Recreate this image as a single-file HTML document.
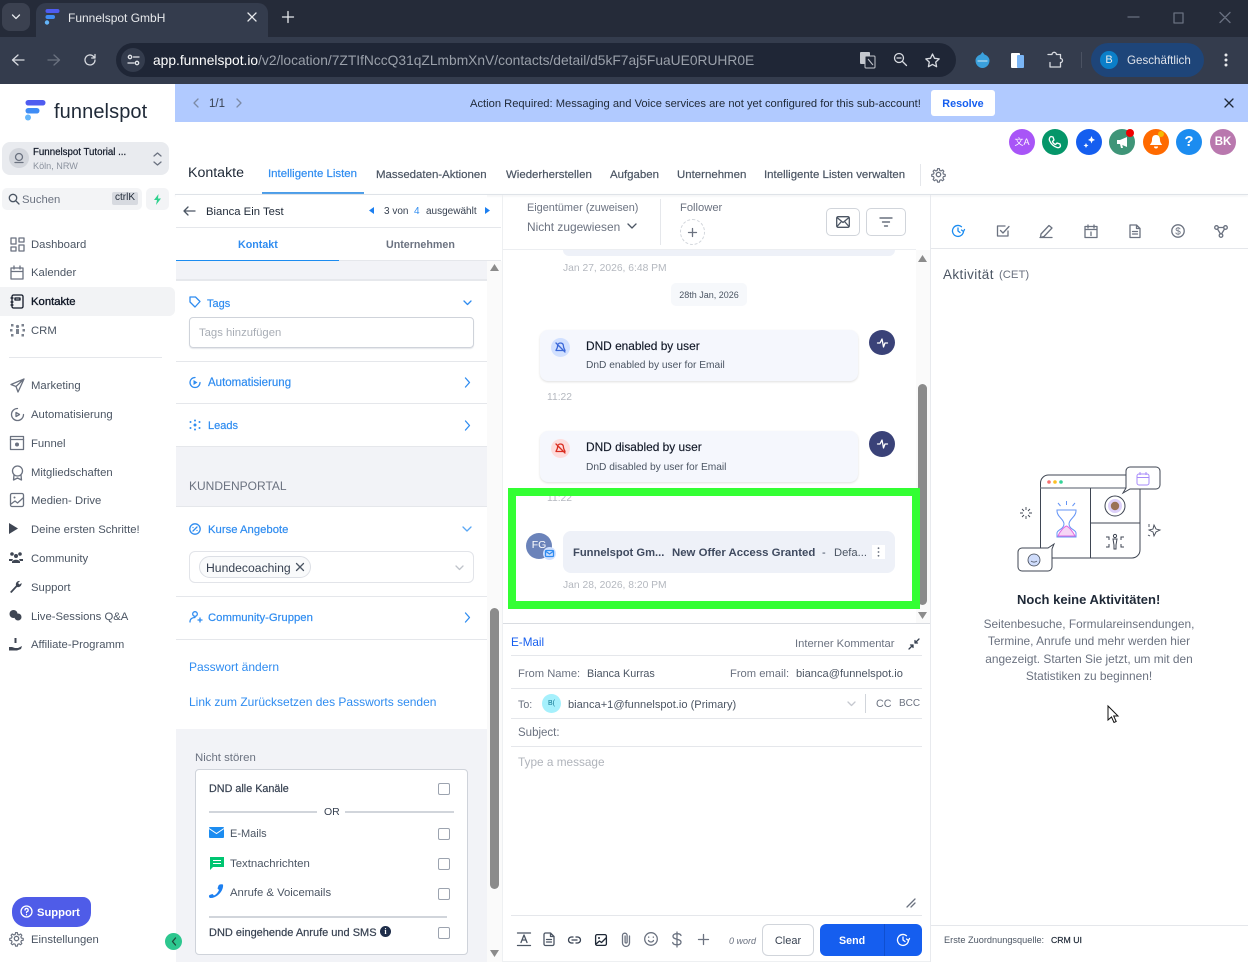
<!DOCTYPE html>
<html lang="de"><head><meta charset="utf-8"><title>Funnelspot GmbH</title>
<style>
*{box-sizing:border-box}
html,body{margin:0;padding:0;width:1248px;height:962px;overflow:hidden;background:#fff;font-family:"Liberation Sans",sans-serif}
.a{position:absolute}
.t{position:absolute;white-space:nowrap;line-height:16px;font-size:12px;color:#4b5563}
.n{font-size:11.3px}
.k{font-size:11.45px;top:168px;-webkit-text-stroke:.2px #4b5563}
.l{font-size:11.3px;color:#2f8cf0;-webkit-text-stroke:.2px #2f8cf0}
svg{position:absolute;overflow:visible}
.s{fill:none;stroke:currentColor;stroke-width:1.3;stroke-linecap:round;stroke-linejoin:round}
.hl{position:absolute;height:1px;background:#e5e7eb}
.cb{position:absolute;width:12px;height:12px;border:1px solid #9ca3af;border-radius:2px;background:#fff;left:438px}
.c{position:absolute;width:26px;height:26px;border-radius:50%;top:129px}
</style></head><body>

<!-- Browser chrome -->
<div class="a" style="left:0;top:0;width:1248px;height:84px;background:#252b39"></div>
<div class="a" style="left:0;top:37px;width:1248px;height:47px;background:#343c4d"></div>
<div class="a" style="left:2px;top:3px;width:28px;height:28px;background:#3b4150;border-radius:8px"></div>
<svg style="left:0;top:0" width="30" height="34" color="#e5e7eb"><path class="s" stroke-width="1.8" d="M12.500 15l3.500 3.500 3.500-3.500"/></svg>
<div class="a" style="left:36px;top:3px;width:232px;height:34px;background:#343c4d;border-radius:10px 10px 0 0"></div>
<svg style="left:44px;top:9px" width="16" height="16"><rect x="1.500" y="0" width="14" height="4" rx="2" fill="#4f5cf0"/><rect x="1.500" y="6" width="9.500" height="4" rx="2" fill="#3f8cf5"/><circle cx="3" cy="13.500" r="2.200" fill="#64b5fa"/></svg>
<div class="t" style="left:68px;top:10px;font-size:12px;color:#e8eaed">Funnelspot GmbH</div>
<svg style="left:247px;top:12px" width="10" height="10" color="#e8eaed"><path class="s" stroke-width="1.5" d="M1 1l8 8M9 1l-8 8"/></svg>
<svg style="left:282px;top:11px" width="12" height="12" color="#e8eaed"><path class="s" stroke-width="1.5" d="M6 0.5v11M0.5 6h11"/></svg>
<svg style="left:1127px;top:12px" width="110" height="12" color="#697080"><path class="s" d="M1 5h11M47 1h9v10h-9zM93 0.5l10 10M103 0.5l-10 10"/></svg>

<svg style="left:11px;top:53px" width="14" height="14" color="#d7dae0"><path class="s" stroke-width="1.5" d="M13 7H2M7 2L1.500 7 7 12"/></svg>
<svg style="left:47px;top:53px" width="14" height="14" color="#6b7280"><path class="s" stroke-width="1.5" d="M1 7h11M7 2l5.500 5L7 12"/></svg>
<svg style="left:83px;top:53px" width="14" height="14" color="#d7dae0"><path class="s" stroke-width="1.5" d="M12 7a5 5 0 1 1-1.600-3.700L12 5V1.500M12 5H8.700"/></svg>
<div class="a" style="left:116px;top:43px;width:840px;height:34px;background:#1f2636;border-radius:17px"></div>
<div class="a" style="left:121px;top:48px;width:24px;height:24px;background:#343c4d;border-radius:50%"></div>
<svg style="left:127px;top:54px" width="13" height="12" color="#e5e7eb"><circle class="s" cx="3" cy="3" r="1.700"/><path class="s" d="M6.500 3H12M1 9h6"/><circle class="s" cx="10" cy="9" r="1.700"/></svg>
<div class="t" style="left:153px;top:53px;font-size:13.8px;color:#9aa0aa"><span style="color:#fff">app.funnelspot.io</span>/v2/location/7ZTIfNccQ31qZLmbmXnV/contacts/detail/d5kF7aj5FuaUE0RUHR0E</div>
<svg style="left:859px;top:51px" width="18" height="18"><rect x="1" y="1" width="10" height="12" rx="1" fill="#c5c8cf"/><rect x="6" y="5" width="10" height="12" rx="1" fill="#1f2636" stroke="#c5c8cf"/><path d="M9 8l5 6" stroke="#c5c8cf"/></svg>
<svg style="left:893px;top:52px" width="15" height="15" color="#d7dae0"><circle class="s" cx="6" cy="6" r="4.500"/><path class="s" d="M4 6h4M9.500 9.500l4 4"/></svg>
<svg style="left:925px;top:53px" width="15" height="14" color="#d7dae0"><path class="s" d="M7.500 1l2 4.300 4.700.6-3.500 3.200.9 4.600-4.100-2.300-4.100 2.300.9-4.600L.8 5.900l4.700-.6z"/></svg>
<svg style="left:975px;top:52px" width="15" height="16"><path d="M7.500 0l2 2.500c3 1 5 3.500 5 6 0 4-3 7.500-7 7.500s-7-3.500-7-7.500c0-2.500 2-5 5-6z" fill="#3aa0dc"/><path d="M2.500 9h10" stroke="#cfe8f5"/></svg>
<svg style="left:1011px;top:52px" width="14" height="16"><rect x="0" y="1" width="9" height="15" rx="1" fill="#fff"/><rect x="6" y="3" width="7" height="13" rx="1" fill="#7ab5f5"/></svg>
<svg style="left:1047px;top:51px" width="16" height="17" color="#d7dae0"><path class="s" stroke-width="1.500" d="M1 3.500h4a2.200 2.200 0 0 1 4.400 0h4.100v4a2 2 0 0 1 0 4v4.500h-10.500v-4.500"/></svg>
<div class="a" style="left:1081px;top:52px;width:1px;height:16px;background:#4b5262"></div>
<div class="a" style="left:1091px;top:43px;width:113px;height:34px;background:#1e4579;border-radius:17px"></div>
<div class="a" style="left:1100px;top:51px;width:18px;height:18px;background:#0b7fc9;border-radius:50%;color:#e8eaed;font-size:11px;line-height:18px;text-align:center">B</div>
<div class="t" style="left:1127px;top:53px;font-size:11.6px;color:#dfe3ea">Geschäftlich</div>
<svg style="left:1224px;top:53px" width="4" height="14"><circle cx="2" cy="2" r="1.500" fill="#e8eaed"/><circle cx="2" cy="7" r="1.500" fill="#e8eaed"/><circle cx="2" cy="12" r="1.500" fill="#e8eaed"/></svg>

<!-- Sidebar -->
<div class="a" style="left:0;top:84px;width:175px;height:878px;background:#fff"></div>
<svg style="left:24px;top:99px" width="22" height="24"><rect x="1.500" y="1" width="20" height="5.500" rx="2.700" fill="#4f5cf0"/><rect x="1.500" y="9" width="14" height="5.500" rx="2.700" fill="#3f8cf5"/><circle cx="4" cy="18.500" r="3" fill="#64b5fa"/></svg>
<div class="t" style="left:54px;top:101px;font-size:20px;line-height:22px;color:#1f2937;letter-spacing:.1px">funnelspot</div>
<div class="a" style="left:2px;top:142px;width:167px;height:33px;background:#e9ebef;border-radius:8px"></div>
<div class="a" style="left:9px;top:148px;width:20px;height:20px;background:#d3d6dc;border-radius:50%"></div>
<svg style="left:13px;top:152px" width="12" height="12" color="#6b7280"><circle class="s" cx="6" cy="5" r="3.500" stroke-width="1"/><path class="s" stroke-width="1" d="M2 10.500h8"/></svg>
<div class="t" style="left:33px;top:145px;font-size:9.7px;color:#111827;-webkit-text-stroke:.2px #111827">Funnelspot Tutorial ...</div>
<div class="t" style="left:33px;top:158px;font-size:9.1px;color:#8b929e">Köln, NRW</div>
<svg style="left:153px;top:152px" width="9" height="14" color="#6b7280"><path class="s" stroke-width="1" d="M1 4l3.500-3L8 4M1 10l3.500 3L8 10"/></svg>
<div class="a" style="left:2px;top:188px;width:140px;height:22px;background:#f3f4f6;border-radius:5px"></div>
<svg style="left:8px;top:193px" width="12" height="12" color="#4b5563"><circle class="s" cx="5" cy="5" r="3.700"/><path class="s" d="M8 8l3 3"/></svg>
<div class="t n" style="left:22px;top:192px;color:#6b7280">Suchen</div>
<div class="a" style="left:112px;top:192px;width:26px;height:13px;background:#d7dae0;border-radius:2px;font-size:10px;line-height:12px;text-align:center;color:#1f2937">ctrlK</div>
<div class="a" style="left:146px;top:188px;width:23px;height:22px;background:#f3f4f6;border-radius:5px"></div>
<svg style="left:153px;top:194px" width="9" height="11"><path d="M5.500 0L1 6h3l-1 5 5-6.500H5z" fill="#2fd18e"/></svg>

<div class="a" style="left:0;top:287px;width:175px;height:29px;background:#f2f3f5;border-radius:0 6px 6px 0"></div>
<div class="t n" style="left:31px;top:237px">Dashboard</div>
<div class="t n" style="left:31px;top:265px">Kalender</div>
<div class="t n" style="left:31px;top:294px;color:#111827;-webkit-text-stroke:.35px #111827">Kontakte</div>
<div class="t n" style="left:31px;top:323px">CRM</div>
<div class="hl" style="left:9px;top:357px;width:153px"></div>
<div class="t n" style="left:31px;top:378px">Marketing</div>
<div class="t n" style="left:31px;top:407px">Automatisierung</div>
<div class="t n" style="left:31px;top:436px">Funnel</div>
<div class="t n" style="left:31px;top:465px">Mitgliedschaften</div>
<div class="t n" style="left:31px;top:493px">Medien- Drive</div>
<div class="t n" style="left:31px;top:522px">Deine ersten Schritte!</div>
<div class="t n" style="left:31px;top:551px">Community</div>
<div class="t n" style="left:31px;top:580px">Support</div>
<div class="t n" style="left:31px;top:609px">Live-Sessions Q&amp;A</div>
<div class="t n" style="left:31px;top:637px">Affiliate-Programm</div>
<svg style="left:10px;top:237px" width="15" height="15" color="#6b7280"><path class="s" stroke-width="1" d="M1 1h5v6H1zM9 1h5v4H9zM1 10h5v4H1zM9 8h5v6H9z"/></svg>
<svg style="left:10px;top:265px" width="14" height="15" color="#6b7280"><path class="s" stroke-width="1" d="M1 3h12v11H1zM1 6.500h12M4 1v3M10 1v3"/></svg>
<svg style="left:10px;top:294px" width="14" height="15" color="#111827"><rect class="s" x="2" y="1" width="11" height="13" rx="1.500"/><path class="s" d="M5 4h5v2H5zM1 4h2M1 8h2M1 11h2"/></svg>
<svg style="left:10px;top:323px" width="15" height="14"><g fill="#7b828e"><circle cx="7.500" cy="3.500" r="1.600"/><rect x="6" y="6" width="3" height="5"/><rect x="1" y="1" width="2.500" height="2.500"/><rect x="11.500" y="1" width="2.500" height="2.500"/><rect x="0" y="6" width="2.500" height="2.500"/><rect x="12.500" y="6" width="2.500" height="2.500"/><rect x="1" y="11" width="2.500" height="2.500"/><rect x="11.500" y="11" width="2.500" height="2.500"/></g></svg>
<svg style="left:10px;top:378px" width="15" height="15" color="#6b7280"><path class="s" stroke-width="1" d="M14 1L1 6.500 6 8.500 8 14zM6 8.500L14 1"/></svg>
<svg style="left:10px;top:407px" width="15" height="15" color="#6b7280"><path class="s" stroke-width="1" d="M13.500 7.500a6 6 0 1 1-6-6M6 5.500l3.500 2L6 9.500z"/></svg>
<svg style="left:10px;top:436px" width="14" height="14" color="#6b7280"><rect class="s" stroke-width="1" x=".5" y=".5" width="13" height="13"/><path class="s" stroke-width="1" d="M.5 3.500h13"/><circle cx="7" cy="8.500" r="2" fill="#6b7280"/></svg>
<svg style="left:11px;top:465px" width="13" height="16" color="#6b7280"><circle class="s" stroke-width="1" cx="6.500" cy="6" r="5"/><path class="s" stroke-width="1" d="M3 10l-.5 5L6.500 13l4 2-.5-5"/></svg>
<svg style="left:10px;top:493px" width="14" height="14" color="#6b7280"><rect class="s" stroke-width="1" x=".5" y=".5" width="13" height="13" rx="1.500"/><circle cx="4.500" cy="4.500" r="1" fill="#6b7280"/><path class="s" stroke-width="1" d="M1 11l4-3 2.500 2L13 5"/></svg>
<svg style="left:9px;top:523px" width="9" height="11"><path d="M0 0l9 5.500L0 11z" fill="#3f4653"/></svg>
<svg style="left:9px;top:552px" width="14" height="11"><g fill="#3f4653"><circle cx="3" cy="2" r="1.800"/><circle cx="11" cy="2" r="1.800"/><circle cx="7" cy="4" r="2"/><path d="M0 7h4l-1 2H0zM14 7h-4l1 2h3zM3 10c0-3 8-3 8 0v1H3z"/></g></svg>
<svg style="left:9px;top:580px" width="13" height="13"><path d="M1 12l6-6.500A3.500 3.500 0 0 1 11 1L9 3l1.500 1.500L12.500 3A3.500 3.500 0 0 1 8 7l-5.500 6z" fill="#3f4653"/></svg>
<svg style="left:9px;top:610px" width="13" height="11"><circle cx="4.500" cy="4" r="4" fill="#3f4653"/><circle cx="9" cy="7" r="3.500" fill="#3f4653"/></svg>
<svg style="left:9px;top:637px" width="13" height="14"><path d="M5.500 1h2v5h-2zM0 10h3l3 1h3l4-2-1 3-4 1.500H0z" fill="#3f4653"/></svg>

<div class="a" style="left:12px;top:897px;width:79px;height:30px;background:#4f5ce8;border-radius:14px 8px 14px 14px"></div>
<svg style="left:20px;top:905px" width="13" height="13" color="#fff"><circle class="s" stroke-width="1" cx="6.500" cy="6.500" r="5.500"/><path class="s" stroke-width="1" d="M5 5a1.600 1.600 0 1 1 2 1.600c-.5.2-.5.6-.5 1M6.500 9.500v.2"/></svg>
<div class="t" style="left:37px;top:905px;color:#fff;font-weight:bold;font-size:11.2px">Support</div>
<svg style="left:9px;top:931px" width="15" height="15" color="#6b7280"><circle class="s" stroke-width="1" cx="7.500" cy="7.500" r="2.200"/><path class="s" stroke-width="1" d="M6.500 1h2l.4 2 1.500.6 1.700-1.100 1.400 1.400-1.100 1.700.6 1.500 2 .4v2l-2 .4-.6 1.500 1.100 1.700-1.400 1.400-1.700-1.100-1.500.6-.4 2h-2l-.4-2-1.500-.6-1.700 1.100-1.400-1.400 1.100-1.700-.6-1.500-2-.4v-2l2-.4.6-1.500-1.100-1.700 1.400-1.400 1.700 1.100 1.500-.6z" transform="scale(.9) translate(.8 .8)"/></svg>
<div class="t n" style="left:31px;top:932px">Einstellungen</div>

<!-- Top banner -->
<div class="a" style="left:175px;top:84px;width:1073px;height:38px;background:#b1caff"></div>
<svg style="left:192px;top:98px" width="8" height="10" color="#7c8aa5"><path class="s" d="M6 1L2 5l4 4"/></svg>
<div class="t" style="left:209px;top:96px;font-size:11.5px;color:#374151">1/1</div>
<svg style="left:235px;top:98px" width="8" height="10" color="#7c8aa5"><path class="s" d="M2 1l4 4-4 4"/></svg>
<div class="t" style="left:470px;top:96px;font-size:11.18px;color:#1f2937">Action Required: Messaging and Voice services are not yet configured for this sub-account!</div>
<div class="a" style="left:931px;top:90px;width:64px;height:26px;background:#fff;border-radius:3px;text-align:center;font-size:10.8px;font-weight:bold;line-height:28px;color:#155eef">Resolve</div>
<svg style="left:1224px;top:98px" width="10" height="10" color="#1f2937"><path class="s" stroke-width="1.500" d="M1 1l8 8M9 1l-8 8"/></svg>

<!-- Header icons -->
<div class="c" style="left:1009px;background:#a855f7;color:#fff;font-size:9px;line-height:27px;text-align:center;font-family:'Liberation Sans','Noto Sans CJK SC',sans-serif">文A</div>
<div class="c" style="left:1042px;background:#059669"></div>
<svg style="left:1048px;top:135px" width="14" height="14" color="#fff"><path class="s" d="M3 1.500l2 .5 1 3-1.500 1.500c.5 1.500 1.500 2.500 3 3L9 8l3 1 .5 2c-.5 1.500-2 2-3.500 1.500C6 11.500 3 9 1.500 5.500 1 4 1.500 2 3 1.500z"/></svg>
<div class="c" style="left:1076px;background:#155eef"></div>
<svg style="left:1082px;top:135px" width="14" height="14"><path d="M9.500 1l1 2.500L13 5l-2.500 1-1 2.500-1-2.500L6 5l2.500-1.500zM4 8l.8 1.700L6.500 10.500l-1.700.8L4 13l-.8-1.700-1.700-.8 1.700-.8z" fill="#fff"/></svg>
<div class="c" style="left:1109px;background:#3f9578"></div>
<svg style="left:1116px;top:135px" width="14" height="14"><path d="M1 5h3l7-3v10L4 9H1z" fill="#fff"/><path d="M4 9l1 4h2L6 9" fill="#fff"/></svg>
<div class="a" style="left:1126px;top:129px;width:8px;height:8px;border-radius:50%;background:#ef0000"></div>
<div class="c" style="left:1143px;background:#ff6a00"></div>
<svg style="left:1149px;top:134px" width="14" height="16"><path d="M7 1c3 0 4 2 4 5 0 3 2 4 2 5H1c0-1 2-2 2-5 0-3 1-5 4-5zM5 12.500h4a2 2 0 0 1-4 0z" fill="#fff"/></svg>
<div class="a" style="left:1158px;top:131px;width:6px;height:6px;border-radius:50%;background:#f5b800"></div>
<div class="c" style="left:1176px;background:#1c8cf0;color:#fff;font-size:15px;font-weight:bold;line-height:26px;text-align:center">?</div>
<div class="c" style="left:1210px;background:#b978ae;color:#fff;font-size:11.5px;font-weight:bold;line-height:26px;text-align:center">BK</div>

<!-- Nav row -->
<div class="t" style="left:188px;top:165px;font-size:14.2px;color:#1f2937">Kontakte</div>
<div class="t k" style="left:268px;top:166px;color:#2f8cf0;-webkit-text-stroke:.2px #2f8cf0">Intelligente Listen</div>
<div class="a" style="left:262px;top:192px;width:102px;height:2px;background:#4a9be8"></div>
<div class="t k" style="left:376px;top:167px">Massedaten-Aktionen</div>
<div class="t k" style="left:506px;top:167px">Wiederherstellen</div>
<div class="t k" style="left:610px;top:167px">Aufgaben</div>
<div class="t k" style="left:677px;top:167px">Unternehmen</div>
<div class="t k" style="left:764px;top:167px">Intelligente Listen verwalten</div>
<div class="a" style="left:920px;top:164px;width:1px;height:22px;background:#e5e7eb"></div>
<svg style="left:931px;top:167px" width="15" height="15" color="#6b7280"><circle class="s" stroke-width="1" cx="7.500" cy="7.500" r="2.200"/><path class="s" stroke-width="1" d="M6.500 1h2l.4 2 1.500.6 1.700-1.100 1.400 1.400-1.100 1.700.6 1.500 2 .4v2l-2 .4-.6 1.500 1.100 1.700-1.400 1.400-1.700-1.100-1.500.6-.4 2h-2l-.4-2-1.500-.6-1.700 1.100-1.400-1.400 1.100-1.700-.6-1.500-2-.4v-2l2-.4.6-1.500-1.100-1.700 1.400-1.400 1.700 1.100 1.500-.6z" transform="scale(.9) translate(.8 .8)"/></svg>
<div class="a" style="left:175px;top:194px;width:1073px;height:1px;background:#dfe3e8;box-shadow:0 1px 2px #e5e7eb"></div>

<!-- Left contact panel -->
<div class="a" style="left:176px;top:195px;width:311px;height:767px;background:#fff"></div>
<svg style="left:183px;top:206px" width="13" height="10" color="#4b5563"><path class="s" d="M12 5H1M5 1L1 5l4 4"/></svg>
<div class="t" style="left:206px;top:204px;font-size:11.3px;color:#1f2937">Bianca Ein Test</div>
<svg style="left:369px;top:207px" width="5" height="7"><path d="M5 0v7L0 3.500z" fill="#1c7ff0"/></svg>
<div class="t" style="left:384px;top:204px;font-size:10px;color:#374151">3 von</div>
<div class="t" style="left:414px;top:204px;font-size:10px;color:#2f8cf0">4</div>
<div class="t" style="left:426px;top:204px;font-size:10px;color:#374151">ausgewählt</div>
<svg style="left:485px;top:207px" width="5" height="7"><path d="M0 0v7l5-3.500z" fill="#1c7ff0"/></svg>
<div class="hl" style="left:176px;top:227px;width:325px"></div>
<div class="t" style="left:238px;top:237px;font-size:10.7px;font-weight:bold;color:#2f8cf0">Kontakt</div>
<div class="t" style="left:386px;top:237px;font-size:10.7px;font-weight:bold;color:#6b7280">Unternehmen</div>
<div class="a" style="left:176px;top:260px;width:163px;height:1px;background:#1c8cf0"></div>
<div class="hl" style="left:339px;top:260px;width:162px"></div>

<div class="a" style="left:176px;top:261px;width:311px;height:20px;background:#f2f3f7;border-bottom:2px solid #e6e8ec"></div>
<div class="a" style="left:189px;top:261px;width:70px;height:3px;overflow:hidden"><div class="t" style="left:0;top:-12px;font-size:11px;color:#6b7280">AKTIVITÄTEN</div></div>
<div class="a" style="left:176px;top:361px;width:311px;height:1px;background:#e5e7eb"></div>
<div class="a" style="left:176px;top:403px;width:311px;height:1px;background:#e5e7eb"></div>
<div class="a" style="left:176px;top:446px;width:311px;height:61px;background:#f2f3f7;border-top:1px solid #e5e7eb;border-bottom:1px solid #e5e7eb"></div>

<svg style="left:189px;top:296px" width="12" height="12" color="#2f8cf0"><path class="s" d="M1 1h5.500L11 5.500 6 11 1 6z"/></svg>
<div class="t l" style="left:207px;top:296px;font-size:11px">Tags</div>
<svg style="left:463px;top:300px" width="9" height="6" color="#2f8cf0"><path class="s" d="M1 1l3.500 3.500L8 1"/></svg>
<div class="a" style="left:189px;top:317px;width:285px;height:31px;border:1px solid #cfd3da;border-radius:4px;box-shadow:0 1px 1px #e5e7eb"></div>
<div class="t" style="left:199px;top:325px;font-size:11.3px;color:#a8adb5">Tags hinzufügen</div>

<svg style="left:189px;top:376px" width="12" height="13" color="#2f8cf0"><path class="s" d="M11 6.500a5 5 0 1 1-5-5"/><path d="M4.500 4l4 2.500-4 2.500z" fill="#2f8cf0"/></svg>
<div class="t l" style="left:208px;top:375px;font-size:11.5px">Automatisierung</div>
<svg style="left:464px;top:377px" width="7" height="11" color="#2f8cf0"><path class="s" d="M1.500 1l4 4.500-4 4.500"/></svg>
<svg style="left:189px;top:419px" width="12" height="12"><g fill="#2f8cf0"><circle cx="6" cy="6" r="1.500"/><circle cx="1.500" cy="3" r="1"/><circle cx="1.500" cy="9" r="1"/><circle cx="10.500" cy="3" r="1"/><circle cx="10.500" cy="9" r="1"/><circle cx="6" cy="1.500" r="1"/><circle cx="6" cy="10.500" r="1"/></g></svg>
<div class="t l" style="left:208px;top:418px;font-size:11px">Leads</div>
<svg style="left:464px;top:420px" width="7" height="11" color="#2f8cf0"><path class="s" d="M1.500 1l4 4.500-4 4.500"/></svg>

<div class="t" style="left:189px;top:478px;color:#6b7280">KUNDENPORTAL</div>

<svg style="left:189px;top:523px" width="12" height="12" color="#2f8cf0"><circle class="s" cx="6" cy="6" r="5.200"/><path class="s" d="M4 8l4-4M4 4.500v0M8 7.500v0"/></svg>
<div class="t l" style="left:208px;top:522px">Kurse Angebote</div>
<svg style="left:462px;top:526px" width="10" height="6" color="#5aa7f5"><path class="s" d="M1 1l4 4 4-4"/></svg>
<div class="a" style="left:189px;top:551px;width:285px;height:32px;border:1px solid #e2e4e9;border-radius:6px"></div>
<div class="a" style="left:199px;top:556px;width:112px;height:22px;border:1px solid #dcdfe5;border-radius:11px;background:#f9fafb"></div>
<div class="t" style="left:206px;top:560px;font-size:12.2px;color:#374151">Hundecoaching</div>
<svg style="left:296px;top:563px" width="8" height="8" color="#4b5563"><path class="s" stroke-width="1" d="M.5.500l7 7M7.500.500l-7 7"/></svg>
<svg style="left:455px;top:565px" width="9" height="6" color="#bfc3ca"><path class="s" stroke-width="1" d="M1 1l3.500 3.500L8 1"/></svg>
<div class="a" style="left:176px;top:596px;width:311px;height:1px;background:#e5e7eb"></div>
<svg style="left:189px;top:611px" width="13" height="12" color="#2f8cf0"><circle class="s" stroke-width="1" cx="6" cy="3" r="2.300"/><path class="s" stroke-width="1" d="M1 11c0-3 2-4.500 5-4.500M9 9h4M11 7v4"/></svg>
<div class="t l" style="left:208px;top:610px">Community-Gruppen</div>
<svg style="left:464px;top:612px" width="7" height="11" color="#2f8cf0"><path class="s" d="M1.500 1l4 4.500-4 4.500"/></svg>
<div class="a" style="left:176px;top:639px;width:311px;height:1px;background:#e5e7eb"></div>
<div class="t" style="left:189px;top:659px;font-size:12px;color:#2f8cf0">Passwort ändern</div>
<div class="t" style="left:189px;top:694px;font-size:12px;color:#2f8cf0">Link zum Zurücksetzen des Passworts senden</div>

<div class="a" style="left:176px;top:729px;width:311px;height:233px;background:#f2f3f7"></div>
<div class="t" style="left:195px;top:750px;font-size:11.4px;color:#6b7280">Nicht stören</div>
<div class="a" style="left:195px;top:769px;width:273px;height:186px;background:#fff;border:1px solid #cfd3da;border-radius:4px"></div>
<div class="t" style="left:209px;top:781px;font-size:10.8px;-webkit-text-stroke:.2px #374151;color:#374151">DND alle Kanäle</div>
<div class="cb" style="top:783px"></div>
<div class="a" style="left:209px;top:811px;width:108px;height:2px;background:#d1d5db"></div>
<div class="t" style="left:324px;top:804px;font-size:10.5px;color:#374151">OR</div>
<div class="a" style="left:345px;top:811px;width:109px;height:2px;background:#d1d5db"></div>
<svg style="left:209px;top:827px" width="15" height="11"><rect width="15" height="11" rx="1" fill="#1c8cf0"/><path d="M0 1.500l7.500 5 7.500-5" fill="none" stroke="#fff"/></svg>
<div class="t" style="left:230px;top:826px;font-size:11px;color:#4b5563">E-Mails</div>
<div class="cb" style="top:828px"></div>
<svg style="left:210px;top:857px" width="14" height="13"><path d="M0 0h14v10H3l-3 3z" fill="#00c571"/><path d="M3 3.500h8M3 6.500h8" stroke="#fff"/></svg>
<div class="t" style="left:230px;top:856px;font-size:11.4px;color:#4b5563">Textnachrichten</div>
<div class="cb" style="top:858px"></div>
<svg style="left:209px;top:884px" width="15" height="15"><path d="M14 0.500c1 6-6 14-13 13.500-1-.5-1.500-2-.5-3l3-1 1.500 1.500c2-1 4-3 5-5.500L8.500 4.500l1-3c1-1.500 3-1.500 4.500-1z" fill="#1c7ff0"/></svg>
<div class="t" style="left:230px;top:885px;font-size:11.3px;color:#4b5563">Anrufe &amp; Voicemails</div>
<div class="cb" style="top:888px"></div>
<div class="a" style="left:209px;top:916px;width:238px;height:2px;background:#d1d5db"></div>
<div class="t" style="left:209px;top:925px;font-size:11px;-webkit-text-stroke:.2px #374151;color:#374151">DND eingehende Anrufe und SMS</div>
<div class="a" style="left:380px;top:926px;width:11px;height:11px;border-radius:50%;background:#1f2e4a;color:#fff;font:bold 8px/11px 'Liberation Serif',serif;text-align:center">i</div>
<div class="cb" style="top:927px"></div>

<div class="a" style="left:165px;top:933px;width:17px;height:17px;border-radius:50%;background:#2dc78f"></div>
<svg style="left:171px;top:937px" width="6" height="9" color="#1f4a3a"><path class="s" d="M4.500 1L1.500 4.500 4.500 8"/></svg>

<!-- Left scrollbar -->
<div class="a" style="left:487px;top:261px;width:15px;height:701px;background:#fafafa"></div>
<svg style="left:490px;top:264px" width="9" height="7"><path d="M0 7l4.500-7L9 7z" fill="#8b8b8b"/></svg>
<div class="a" style="left:490px;top:608px;width:9px;height:281px;background:#8b8b8b;border-radius:5px"></div>
<svg style="left:490px;top:950px" width="9" height="7"><path d="M0 0l4.500 7L9 0z" fill="#8b8b8b"/></svg>

<!-- Center panel -->
<div class="a" style="left:502px;top:195px;width:1px;height:767px;background:#eef0f2"></div>
<div class="t" style="left:527px;top:200px;font-size:10.9px;color:#6b7280">Eigentümer (zuweisen)</div>
<div class="t" style="left:527px;top:219px;font-size:11.9px;color:#6b7280">Nicht zugewiesen</div>
<svg style="left:627px;top:223px" width="10" height="7" color="#4b5563"><path class="s" d="M1 1l4 4 4-4"/></svg>
<div class="a" style="left:660px;top:199px;width:1px;height:46px;background:#e5e7eb"></div>
<div class="t" style="left:680px;top:200px;font-size:11.2px;color:#6b7280">Follower</div>
<div class="a" style="left:680px;top:219px;width:25px;height:26px;border:1px dashed #d1d5db;border-radius:50%"></div>
<svg style="left:688px;top:228px" width="9" height="9" color="#6b7280"><path class="s" stroke-width="1" d="M4.500.5v8M.5 4.500h8"/></svg>
<div class="a" style="left:826px;top:208px;width:34px;height:28px;border:1px solid #d1d5db;border-radius:5px"></div>
<svg style="left:836px;top:216px" width="14" height="12" color="#4b5563"><rect class="s" x=".7" y=".7" width="12.600" height="10.600" rx="1.500"/><path class="s" stroke-width="1" d="M1 1.500l6 5 6-5M1 10.500l4.500-5M13 10.500l-4.500-5"/></svg>
<div class="a" style="left:866px;top:208px;width:40px;height:28px;border:1px solid #d1d5db;border-radius:5px"></div>
<svg style="left:879px;top:217px" width="14" height="10" color="#4b5563"><path class="s" stroke-width="1.300" d="M1 1h12M3.500 5h7M5.500 9h3"/></svg>
<div class="a" style="left:503px;top:249px;width:413px;height:1px;background:#eceef1"></div>

<div class="a" style="left:563px;top:250px;width:332px;height:6px;background:#eef1f8;border-radius:0 0 8px 8px"></div>
<div class="t" style="left:563px;top:261px;font-size:10.3px;color:#b4b8bf">Jan 27, 2026, 6:48 PM</div>
<div class="a" style="left:671px;top:283px;width:76px;height:23px;background:#f6f8fb;border-radius:5px;text-align:center;font-size:9px;line-height:25px;color:#4b5563">28th Jan, 2026</div>

<div class="a" style="left:540px;top:330px;width:318px;height:51px;background:#f5f7fd;border-radius:8px;box-shadow:0 1px 2px rgba(0,0,0,.13)"></div>
<div class="a" style="left:551px;top:338px;width:19px;height:19px;background:#d1e0ff;border-radius:50%"></div>
<svg style="left:555px;top:342px" width="11" height="11" color="#3b68d8"><path class="s" stroke-width="1" d="M5.500 1c2 0 3 1.500 3 3.500 0 2 1.500 3 1.500 4H1c0-1 1.500-2 1.500-4C2.500 2.500 3.500 1 5.500 1zM1 1l9 9"/></svg>
<div class="t" style="left:586px;top:338px;font-size:11.9px;color:#111827;-webkit-text-stroke:.15px #111827">DND enabled by user</div>
<div class="t" style="left:586px;top:358px;font-size:10.2px;color:#4b5563">DnD enabled by user for Email</div>
<div class="a" style="left:869px;top:330px;width:26px;height:25px;background:#3a4278;border-radius:50%"></div>
<svg style="left:877px;top:338px" width="11" height="10" color="#fff"><path class="s" d="M.5 5H3l2-4 1.500 8L8 5h2.500"/></svg>
<div class="t" style="left:547px;top:390px;font-size:10.3px;color:#b4b8bf">11:22</div>

<div class="a" style="left:540px;top:431px;width:318px;height:51px;background:#f5f7fd;border-radius:8px;box-shadow:0 1px 2px rgba(0,0,0,.13)"></div>
<div class="a" style="left:551px;top:439px;width:19px;height:19px;background:#fddcdc;border-radius:50%"></div>
<svg style="left:555px;top:443px" width="11" height="11" color="#d92d20"><path class="s" stroke-width="1" d="M5.500 1c2 0 3 1.500 3 3.500 0 2 1.500 3 1.500 4H1c0-1 1.500-2 1.500-4C2.500 2.500 3.500 1 5.500 1zM1 1l9 9"/></svg>
<div class="t" style="left:586px;top:439px;font-size:11.9px;color:#111827;-webkit-text-stroke:.15px #111827">DND disabled by user</div>
<div class="t" style="left:586px;top:460px;font-size:10.2px;color:#4b5563">DnD disabled by user for Email</div>
<div class="a" style="left:869px;top:431px;width:26px;height:26px;background:#3a4278;border-radius:50%"></div>
<svg style="left:877px;top:439px" width="11" height="10" color="#fff"><path class="s" d="M.5 5H3l2-4 1.500 8L8 5h2.500"/></svg>
<div class="t" style="left:547px;top:491px;font-size:10.3px;color:#b4b8bf">11:22</div>

<div class="a" style="left:526px;top:533px;width:26px;height:26px;background:#6b83ba;border-radius:50%;color:#fff;font-size:10.5px;line-height:24px;text-align:center">FG</div>
<div class="a" style="left:543px;top:547px;width:13px;height:13px;background:#cfe0ff;border-radius:50%"></div>
<svg style="left:545px;top:550px" width="9" height="7" color="#2f8cf0"><rect class="s" stroke-width="1" x=".5" y=".5" width="8" height="6" rx="1"/><path class="s" stroke-width=".8" d="M1 1.500l3.500 2.500L8 1.500"/></svg>
<div class="a" style="left:563px;top:531px;width:332px;height:42px;background:#eef1f8;border-radius:8px"></div>
<div class="t" style="left:573px;top:545px;font-size:11.2px;font-weight:bold;color:#3f4a5f">Funnelspot Gm...</div>
<div class="t" style="left:672px;top:545px;font-size:11.4px;font-weight:bold;color:#3f4a5f">New Offer Access Granted</div>
<div class="t" style="left:822px;top:545px;font-size:11.1px;color:#3f4a5f">-</div>
<div class="t" style="left:834px;top:545px;font-size:11.2px;color:#4b5563">Defa...</div>
<div class="a" style="left:872px;top:545px;width:13px;height:14px;background:#fff"></div>
<svg style="left:877px;top:547px" width="3" height="10"><g fill="#6b7280"><circle cx="1.500" cy="1.200" r=".9"/><circle cx="1.500" cy="5" r=".9"/><circle cx="1.500" cy="8.800" r=".9"/></g></svg>
<div class="t" style="left:563px;top:578px;font-size:10.3px;color:#b4b8bf">Jan 28, 2026, 8:20 PM</div>

<!-- center scrollbar -->
<div class="a" style="left:916px;top:250px;width:14px;height:373px;background:#fafafa"></div>
<svg style="left:918px;top:255px" width="9" height="7"><path d="M0 7l4.500-7L9 7z" fill="#8b8b8b"/></svg>
<div class="a" style="left:918px;top:384px;width:9px;height:221px;background:#8b8b8b;border-radius:5px"></div>
<svg style="left:918px;top:612px" width="9" height="7"><path d="M0 0l4.500 7L9 0z" fill="#8b8b8b"/></svg>

<!-- Green highlight -->
<div class="a" style="left:508px;top:488px;width:412px;height:121px;border:8px solid #33ff33"></div>

<!-- Composer -->
<div class="a" style="left:503px;top:623px;width:427px;height:1px;background:#d9dce1"></div>
<div class="t" style="left:511px;top:635px;font-size:11.7px;color:#155eef">E-Mail</div>
<div class="t" style="left:795px;top:636px;font-size:11.2px;color:#6b7280">Interner Kommentar</div>
<svg style="left:908px;top:638px" width="12" height="12" color="#374151"><path class="s" stroke-width="1.100" d="M7 5l4-4M7 2.500V5h2.500M5 7l-4 4M2.500 7H5v2.500"/></svg>
<div class="hl" style="left:511px;top:655px;width:411px"></div>
<div class="t" style="left:518px;top:666px;font-size:11.2px;color:#6b7280">From Name:</div>
<div class="t" style="left:587px;top:666px;font-size:10.8px;color:#4b5563">Bianca Kurras</div>
<div class="t" style="left:730px;top:666px;font-size:11.2px;color:#6b7280">From email:</div>
<div class="t" style="left:796px;top:666px;font-size:11.1px;color:#4b5563">bianca@funnelspot.io</div>
<div class="hl" style="left:511px;top:688px;width:411px"></div>
<div class="t" style="left:518px;top:697px;font-size:10.7px;color:#6b7280">To:</div>
<div class="a" style="left:542px;top:694px;width:19px;height:19px;border-radius:50%;background:#a5f0fc;color:#0e7490;font-size:7px;line-height:19px;text-align:center">B(</div>
<div class="t" style="left:568px;top:697px;font-size:11.1px;color:#4b5563">bianca+1@funnelspot.io (Primary)</div>
<svg style="left:847px;top:701px" width="9" height="6" color="#c5c8cf"><path class="s" stroke-width="1" d="M1 1l3.500 3.500L8 1"/></svg>
<div class="a" style="left:865px;top:694px;width:1px;height:19px;background:#d1d5db"></div>
<div class="t" style="left:876px;top:696px;font-size:10.7px;color:#6b7280">CC</div>
<div class="t" style="left:899px;top:696px;font-size:10px;color:#6b7280">BCC</div>
<div class="hl" style="left:511px;top:718px;width:411px"></div>
<div class="t" style="left:518px;top:725px;font-size:11.5px;color:#6b7280">Subject:</div>
<div class="hl" style="left:511px;top:746px;width:411px"></div>
<div class="t" style="left:518px;top:754px;font-size:11.8px;color:#b0b4bb">Type a message</div>
<svg style="left:907px;top:899px" width="8" height="8" color="#6b7280"><path class="s" stroke-width=".8" d="M0 8L8 0M4 8l4-4"/></svg>
<div class="hl" style="left:511px;top:915px;width:411px"></div>

<svg style="left:517px;top:932px" width="14" height="14" color="#4b5563"><path class="s" stroke-width="1.100" d="M.5 1h13M.5 13.500h13M4 10.500L7 3l3 7.500M5 8h4"/></svg>
<svg style="left:543px;top:932px" width="12" height="14" color="#4b5563"><path class="s" stroke-width="1.100" d="M1 2.500a1.500 1.500 0 0 1 1.500-1.500H7.500L11 4.500V12a1.500 1.500 0 0 1-1.500 1.500h-7A1.500 1.500 0 0 1 1 12zM7.500 1v3.500H11M3.500 7.500h5M3.500 10h5"/></svg>
<svg style="left:568px;top:936px" width="13" height="8" color="#374151"><path class="s" stroke-width="1.200" d="M5 1H3.500a3 3 0 0 0 0 6H5M8 1h1.500a3 3 0 0 1 0 6H8M4 4h5"/></svg>
<svg style="left:595px;top:934px" width="12" height="12" color="#1f2937"><rect class="s" stroke-width="1.200" x=".6" y=".6" width="10.800" height="10.800" rx="1.500"/><circle cx="4" cy="4" r="1" fill="#1f2937"/><path class="s" stroke-width="1.200" d="M1 10l3.500-3 2 1.500L11 4"/></svg>
<svg style="left:621px;top:932px" width="10" height="15" color="#6b7280"><path class="s" stroke-width="1.100" d="M8.500 4v7a3.500 3.500 0 0 1-7 0V3.500a2.300 2.300 0 0 1 4.600 0V10a1 1 0 0 1-2 0V4"/></svg>
<svg style="left:644px;top:932px" width="14" height="14" color="#6b7280"><circle class="s" stroke-width="1.100" cx="7" cy="7" r="6.300"/><path class="s" stroke-width="1.100" d="M4.500 8.500c1 2 4 2 5 0M4.700 5v.3M9.300 5v.3"/></svg>
<svg style="left:672px;top:932px" width="10" height="15" color="#6b7280"><path class="s" stroke-width="1.200" d="M9 3.500C8.500 2 7 1.700 5 1.700 3 1.700 1 2.500 1 4.300c0 2 2 2.500 4 3 2 .5 4 1 4 3 0 1.800-2 2.500-4 2.500-2.500 0-4-.7-4.300-2.300M5 0v15"/></svg>
<svg style="left:698px;top:934px" width="11" height="11" color="#6b7280"><path class="s" stroke-width="1.200" d="M5.500.5v10M.5 5.500h10"/></svg>
<div class="t" style="left:729px;top:933px;font-size:9px;font-style:italic;color:#6b7280">0 word</div>
<div class="a" style="left:762px;top:924px;width:52px;height:32px;border:1px solid #d1d5db;border-radius:6px;text-align:center;font-size:11px;line-height:32px;color:#374151">Clear</div>
<div class="a" style="left:820px;top:924px;width:102px;height:32px;background:#155eef;border-radius:6px"></div>
<div class="a" style="left:884px;top:924px;width:1px;height:32px;background:#0f4fd0"></div>
<div class="t" style="left:839px;top:933px;font-size:10.7px;font-weight:bold;color:#fff">Send</div>
<svg style="left:896px;top:933px" width="14" height="14" color="#fff"><path class="s" stroke-width="1.300" d="M12.500 7a5.500 5.500 0 1 1-2-4.300M7 4v3l2 1.500M10.500 6l2 1.500 1-2"/></svg>
<div class="hl" style="left:503px;top:961px;width:427px;background:#eef0f2"></div>

<!-- Right panel -->
<div class="a" style="left:930px;top:195px;width:1px;height:767px;background:#e8eaee"></div>
<svg style="left:951px;top:224px" width="14" height="14" color="#1c8cf0"><path class="s" stroke-width="1.400" d="M12.500 7a5.500 5.500 0 1 1-2-4.300M7 4v3l2 1.500M10.500 6l2 1.500 1-2"/></svg>
<svg style="left:996px;top:224px" width="14" height="14" color="#6b7280"><path class="s" d="M12 7v5H1.500V2H9M4.500 6.500l2.500 2.500L13 2.500"/></svg>
<svg style="left:1039px;top:224px" width="15" height="14" color="#6b7280"><path class="s" d="M2 10l8-8.500 3 2.500-8 8.500-3.500 1zM1 13.500h12"/></svg>
<svg style="left:1084px;top:224px" width="14" height="14" color="#6b7280"><path class="s" d="M1 2.500h12v11H1zM1 5.500h12M4 1v3M10 1v3M7 8v3.500"/></svg>
<svg style="left:1129px;top:224px" width="12" height="14" color="#6b7280"><path class="s" d="M1 1h6.500L11 4.500v9H1zM7.500 1v3.500H11M3.500 7.500h5M3.500 10h5"/></svg>
<svg style="left:1171px;top:224px" width="14" height="14" color="#6b7280"><circle class="s" cx="7" cy="7" r="6.200"/><text x="7" y="10.500" font-size="10" text-anchor="middle" fill="#6b7280" font-family="Liberation Sans">$</text></svg>
<svg style="left:1214px;top:225px" width="14" height="13" color="#6b7280"><circle class="s" stroke-width="1" cx="2.500" cy="2.500" r="1.800"/><circle class="s" stroke-width="1" cx="11.500" cy="2.500" r="1.800"/><circle class="s" stroke-width="1" cx="7" cy="10.500" r="1.800"/><path class="s" stroke-width="1" d="M4.300 2.500h5.400M3.500 4l3 5M10.500 4l-3 5"/></svg>
<div class="hl" style="left:931px;top:248px;width:317px"></div>
<div class="t" style="left:943px;top:267px;font-size:13.5px;letter-spacing:.4px;color:#4b5563">Aktivität</div>
<div class="t" style="left:999px;top:267px;font-size:11.3px;color:#6b7280">(CET)</div>

<!-- Illustration -->
<svg style="left:1016px;top:466px" width="148" height="108">
<path d="M24.500 17a8 8 0 0 1 8-8H124v75a8 8 0 0 1-8 8H24.500z" fill="#fff" stroke="#3f4653"/>
<path d="M24.500 22H124" stroke="#8b909a" stroke-width="1.500" fill="none"/>
<path d="M74.500 22V92M74.500 57H124" stroke="#3f4653" fill="none"/>
<circle cx="33" cy="16" r="1.800" fill="#f87171"/><circle cx="39" cy="16" r="1.800" fill="#fbbf24"/><circle cx="45" cy="16" r="1.800" fill="#34d399"/>
<path d="M41 44h19v1c0 6-7 8-7 13s7 6 7 9v4H41v-4c0-3 7-4 7-9s-7-7-7-13z" fill="#fff" stroke="#6494f5"/>
<path d="M42 70c2-5 6-9 8.500-10 2.500 1 6 5 8.500 10z" fill="#f6d5f5" stroke="#e26be0"/>
<path d="M50.500 35v4M42 37l2.500 3M59 37l-2.500 3" stroke="#6494f5" fill="none"/>
<circle cx="99" cy="40" r="10" fill="#fff" stroke="#3f4653"/><circle cx="99" cy="40" r="7" fill="#ddd0fa"/><circle cx="99" cy="40" r="4.200" fill="#9a7257"/>
<g fill="none" stroke="#3f4653"><path d="M90 71h3v3M108 71h-3v3M90 81h3v-3M108 81h-3v-3"/><circle cx="99" cy="70" r="1.600"/><path d="M97 73h4l-1 6v4h-2v-4z"/></g>
<path d="M115 1h25a4 4 0 0 1 4 4v14a4 4 0 0 1-4 4h-26l-7 4 3-5V5a4 4 0 0 1 4-4z" fill="#fff" stroke="#3f4653"/>
<rect x="121" y="8" width="12" height="11" rx="2" fill="none" stroke="#a78bfa"/><path d="M121 11.500h12M124 6v3M130 6v3" stroke="#a78bfa" fill="none"/>
<path d="M6 82h26l6-4-2 5v18a4 4 0 0 1-4 4H6a4 4 0 0 1-4-4V86a4 4 0 0 1 4-4z" fill="#fff" stroke="#3f4653"/>
<circle cx="18" cy="94" r="6" fill="#cfdcfb" stroke="#3f4653" stroke-width=".8"/>
<path d="M15 95c1.500 1.500 4.500 1.500 6 0" stroke="#3f4653" stroke-width=".7" fill="none"/>
<g stroke="#3f4653" fill="none" stroke-width=".9"><path d="M10 41v3M10 50v3M4 47h3M13 47h3M6 43l2 2M14 43l-2 2M6 51l2-2M14 51l-2-2"/><path d="M138 59l2 4 4 1-4 2-2 4-1-4-4-2 4-1zM133 58v3M132 69l2 1"/></g>
</svg>
<div class="t" style="left:1017px;top:592px;font-size:13px;font-weight:bold;color:#1f2937">Noch keine Aktivitäten!</div>
<div class="a" style="left:965px;top:616px;width:248px;text-align:center;font-size:11.9px;line-height:17.3px;color:#6b7280">Seitenbesuche, Formulareinsendungen,<br>Termine, Anrufe und mehr werden hier<br>angezeigt. Starten Sie jetzt, um mit den<br>Statistiken zu beginnen!</div>
<svg style="left:1107px;top:705px" width="13" height="19"><path d="M1 1v14l3.500-3 2.500 5.500 2.200-1-2.500-5.500H11z" fill="#fff" stroke="#111" stroke-width="1"/></svg>
<div class="hl" style="left:931px;top:925px;width:317px"></div>
<div class="t" style="left:944px;top:932px;font-size:9.2px;color:#4b5563">Erste Zuordnungsquelle:</div>
<div class="t" style="left:1051px;top:932px;font-size:8.7px;color:#1f2937;-webkit-text-stroke:.2px #1f2937">CRM UI</div>
</body></html>
